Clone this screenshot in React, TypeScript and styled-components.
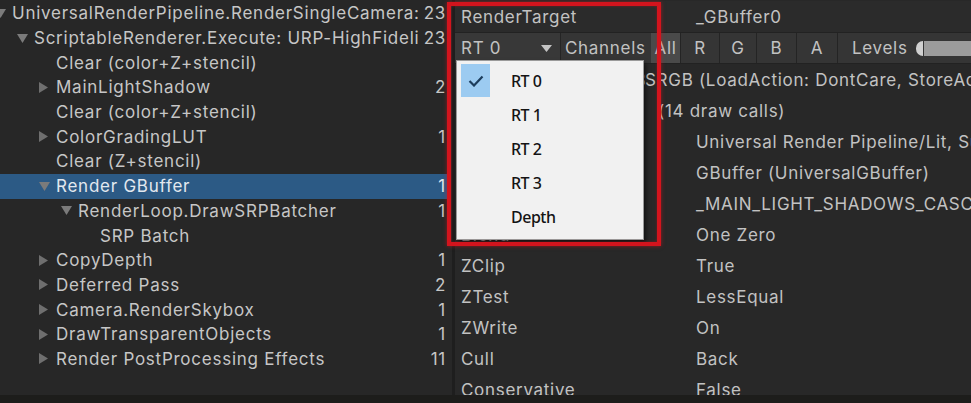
import React from 'react';
import styled, {createGlobalStyle} from 'styled-components';

const GlobalStyle = createGlobalStyle`
  html, body {
    margin: 0;
    padding: 0;
    background: #282828;
  }
  body {
    font-family: Inter, "Noto Sans", sans-serif;
    overflow: hidden;
  }
`;

const Window = styled.div`
  position: relative;
  width: 971px;
  height: 403px;
  display: flex;
  flex-direction: column;
  background: #282828;
  overflow: hidden;
`;

const Main = styled.div`
  display: flex;
  height: 395px;
  flex-shrink: 0;
  overflow: hidden;
`;

const BottomStrip = styled.div`
  height: 8px;
  flex-shrink: 0;
  background: #1d1d1b;
`;

const TreePanel = styled.div`
  width: 455px;
  flex-shrink: 0;
  background: #272727;
  border-right: 3px solid #1e1e1e;
  padding-top: 1px;
  box-sizing: border-box;
  overflow: hidden;
`;

const TreeRow = styled.div<{$selected?: boolean}>`
  display: flex;
  align-items: center;
  height: 24.7px;
  margin-right: 5px;
  padding-right: 1px;
  background: ${p => (p.$selected ? '#2c5a85' : 'transparent')};
  color: ${p => (p.$selected ? '#e2e8ef' : '#c6c6c6')};
  font-size: 17px;
  letter-spacing: 0.75px;
  white-space: nowrap;
`;

const ArrowSlot = styled.span<{$depth: number}>`
  width: 17px;
  margin-left: ${p => p.$depth * 22 - 5}px;
  flex-shrink: 0;
  display: flex;
  align-items: center;
`;

const Label = styled.span`
  flex: 1;
  overflow: hidden;
`;

const Count = styled.span`
  margin-left: 4px;
`;

const Inspector = styled.div`
  flex: 1;
  display: flex;
  flex-direction: column;
  background: #282828;
  color: #c2c2c2;
  font-size: 17px;
  letter-spacing: 0.7px;
  white-space: nowrap;
  overflow: hidden;
`;

const HeaderRow = styled.div`
  display: flex;
  align-items: center;
  flex-shrink: 0;
  height: 31px;
  margin-top: 1px;
  padding-left: 6px;
  background: #2b2b2b;
`;

const Key = styled.span`
  width: 235px;
  flex-shrink: 0;
`;

const Prefix = styled.span<{$width: number; $gap?: number}>`
  width: ${p => p.$width}px;
  margin-right: ${p => p.$gap ?? 0}px;
  flex-shrink: 0;
  overflow: hidden;
  text-align: right;
`;

const Toolbar = styled.div`
  display: flex;
  align-items: stretch;
  flex-shrink: 0;
  height: 32px;
  background: #353535;
  border-top: 1px solid #222;
  border-bottom: 1px solid #222;
  box-sizing: border-box;
`;

const Dropdown = styled.div`
  width: 106px;
  display: flex;
  align-items: center;
  justify-content: space-between;
  padding: 0 8px 0 6px;
  box-sizing: border-box;
  background: #383838;
  border-right: 1px solid #252525;
`;

const ToolLabel = styled.div<{$width: number; $pad?: number}>`
  width: ${p => p.$width}px;
  display: flex;
  align-items: center;
  padding-left: ${p => p.$pad ?? 4}px;
  box-sizing: border-box;
`;

const ChannelButton = styled.div<{$active?: boolean; $width: number}>`
  width: ${p => p.$width}px;
  display: flex;
  align-items: center;
  justify-content: center;
  background: ${p => (p.$active ? '#4a4a4a' : '#353535')};
  border-right: 1px solid #242424;
  box-sizing: border-box;
`;

const LevelsSlider = styled.div`
  flex: 1;
  display: flex;
  align-items: center;
  padding-left: 6px;
`;

const SliderKnob = styled.span`
  width: 7px;
  height: 15px;
  border-radius: 8px 0 0 8px;
  background: #d0d0d0;
`;

const SliderTrack = styled.span`
  flex: 1;
  height: 15px;
  margin-left: 1px;
  background: #9c9c9c;
`;

const InfoRow = styled.div`
  display: flex;
  align-items: center;
  height: 31px;
  flex-shrink: 0;
  padding-left: 6px;
`;

const Annotation = styled.div`
  position: absolute;
  left: 447px;
  top: 2px;
  width: 214px;
  height: 244px;
  box-sizing: border-box;
  border: 4px solid #d3141d;
  box-shadow: 0 0 4px rgba(230, 20, 30, 0.55), inset 0 0 3px rgba(230, 20, 30, 0.4);
  pointer-events: none;
`;

const Menu = styled.div`
  position: absolute;
  left: 456px;
  top: 60px;
  width: 188px;
  height: 180px;
  box-sizing: border-box;
  padding-top: 3px;
  background: #f1f1f1;
  border: 1px solid #9a9a9a;
  box-shadow: 2px 3px 4px rgba(0, 0, 0, 0.55);
  font-family: "Noto Sans", "Open Sans", sans-serif;
  font-size: 16px;
  font-weight: 500;
  letter-spacing: -0.5px;
  color: #141414;
`;

const MenuItem = styled.div`
  position: relative;
  height: 34px;
  display: flex;
  align-items: center;
  padding-left: 54px;
`;

const CheckBox = styled.span`
  position: absolute;
  left: 4px;
  top: 0;
  width: 29px;
  height: 33px;
  background: #9ccbf1;
  display: flex;
  align-items: center;
  justify-content: center;
`;

const ExpandedArrow = () => (
  <svg width="11" height="9" viewBox="0 0 11 9">
    <polygon points="0,0 11,0 5.5,9" fill="#7b7b7b" />
  </svg>
);

const CollapsedArrow = () => (
  <svg width="9" height="11" viewBox="0 0 9 11">
    <polygon points="0,0 9,5.5 0,11" fill="#6f6f6f" />
  </svg>
);

type Node = {label: string; count?: string; depth: number; arrow?: 'open' | 'closed'; selected?: boolean};

const tree: Node[] = [
  {label: 'UniversalRenderPipeline.RenderSingleCamera:', count: '23', depth: 0, arrow: 'open'},
  {label: 'ScriptableRenderer.Execute: URP-HighFideli', count: '23', depth: 1, arrow: 'open'},
  {label: 'Clear (color+Z+stencil)', depth: 2},
  {label: 'MainLightShadow', count: '2', depth: 2, arrow: 'closed'},
  {label: 'Clear (color+Z+stencil)', depth: 2},
  {label: 'ColorGradingLUT', count: '1', depth: 2, arrow: 'closed'},
  {label: 'Clear (Z+stencil)', depth: 2},
  {label: 'Render GBuffer', count: '1', depth: 2, arrow: 'open', selected: true},
  {label: 'RenderLoop.DrawSRPBatcher', count: '1', depth: 3, arrow: 'open'},
  {label: 'SRP Batch', depth: 4},
  {label: 'CopyDepth', count: '1', depth: 2, arrow: 'closed'},
  {label: 'Deferred Pass', count: '2', depth: 2, arrow: 'closed'},
  {label: 'Camera.RenderSkybox', count: '1', depth: 2, arrow: 'closed'},
  {label: 'DrawTransparentObjects', count: '1', depth: 2, arrow: 'closed'},
  {label: 'Render PostProcessing Effects', count: '11', depth: 2, arrow: 'closed'},
];

const props: [string, string][] = [
  ['Shader', 'Universal Render Pipeline/Lit, SubShader #0'],
  ['Pass', 'GBuffer (UniversalGBuffer)'],
  ['Keywords', '_MAIN_LIGHT_SHADOWS_CASCADE _SHADOWS_SOFT'],
  ['Blend', 'One Zero'],
  ['ZClip', 'True'],
  ['ZTest', 'LessEqual'],
  ['ZWrite', 'On'],
  ['Cull', 'Back'],
  ['Conservative', 'False'],
];

function App() {
  return (
    <Window>
      <GlobalStyle />
      <Main>
        <TreePanel>
          {tree.map((n, i) => (
            <TreeRow key={i} $selected={n.selected}>
              <ArrowSlot $depth={n.depth}>
                {n.arrow === 'open' && <ExpandedArrow />}
                {n.arrow === 'closed' && <CollapsedArrow />}
              </ArrowSlot>
              <Label>{n.label}</Label>
              {n.count && <Count>{n.count}</Count>}
            </TreeRow>
          ))}
        </TreePanel>
        <Inspector>
          <HeaderRow>
            <Key>RenderTarget</Key>
            <span>_GBuffer0</span>
          </HeaderRow>
          <Toolbar>
            <Dropdown>
              <span>RT 0</span>
              <svg width="11" height="7" viewBox="0 0 11 7">
                <polygon points="0,0 11,0 5.5,7" fill="#c4c4c4" />
              </svg>
            </Dropdown>
            <ToolLabel $width={90}>Channels</ToolLabel>
            <ChannelButton $active $width={30}>All</ChannelButton>
            <ChannelButton $width={39}>R</ChannelButton>
            <ChannelButton $width={37}>G</ChannelButton>
            <ChannelButton $width={40}>B</ChannelButton>
            <ChannelButton $width={41}>A</ChannelButton>
            <ToolLabel $width={72} $pad={14}>Levels</ToolLabel>
            <LevelsSlider>
              <SliderKnob />
              <SliderTrack />
            </LevelsSlider>
          </Toolbar>
          <InfoRow>
            <Prefix $width={184}>1600x900 R8G8B8A8_</Prefix>
            <span>SRGB (LoadAction: DontCare, StoreAction: Store)</span>
          </InfoRow>
          <InfoRow>
            <Prefix $width={170} $gap={27}>SRP Batch</Prefix>
            <span>(14 draw calls)</span>
          </InfoRow>
          {props.map(([k, v]) => (
            <InfoRow key={k}>
              <Key>{k}</Key>
              <span>{v}</span>
            </InfoRow>
          ))}
        </Inspector>
      </Main>
      <BottomStrip />
      <Menu>
        {['RT 0', 'RT 1', 'RT 2', 'RT 3', 'Depth'].map((item, i) => (
          <MenuItem key={item}>
            {i === 0 && (
              <CheckBox>
                <svg width="16" height="12" viewBox="0 0 16 12">
                  <polyline points="1.5,6 6,10.5 14.5,1.5" fill="none" stroke="#1d3d5c" strokeWidth="2.2" />
                </svg>
              </CheckBox>
            )}
            {item}
          </MenuItem>
        ))}
      </Menu>
      <Annotation />
    </Window>
  );
}

export default App;
